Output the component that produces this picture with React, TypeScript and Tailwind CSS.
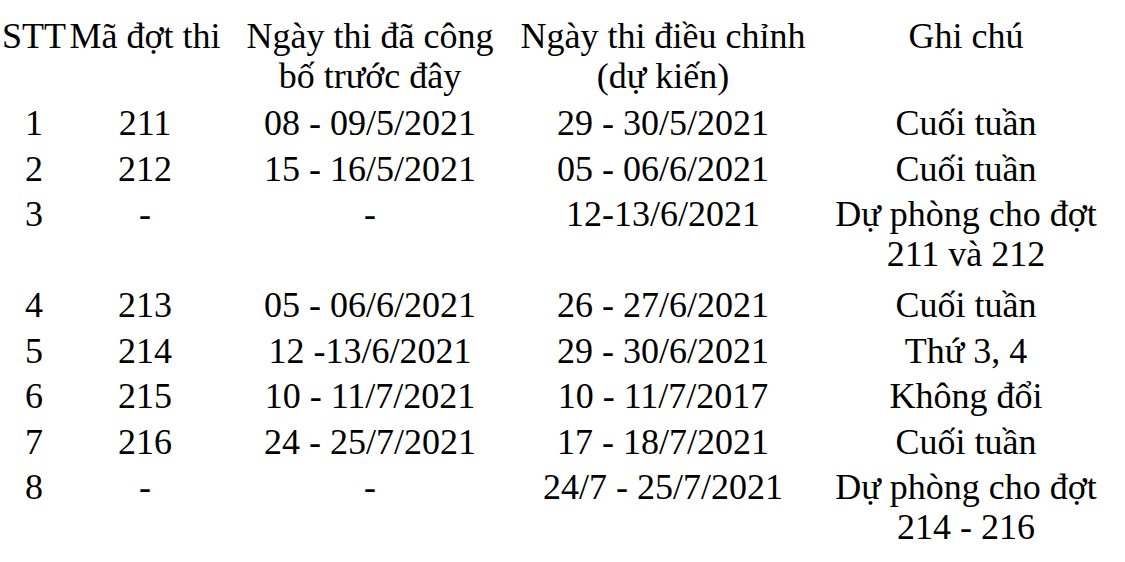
import React from "react"

interface Row {
    stt: string
    code: string
    oldDate: string
    newDate: string
    note: string[]
    tall?: boolean
}

const rows: Row[] = [
    { stt: "1", code: "211", oldDate: "08 - 09/5/2021", newDate: "29 - 30/5/2021", note: ["Cuối tuần"] },
    { stt: "2", code: "212", oldDate: "15 - 16/5/2021", newDate: "05 - 06/6/2021", note: ["Cuối tuần"] },
    { stt: "3", code: "-", oldDate: "-", newDate: "12-13/6/2021", note: ["Dự phòng cho đợt", "211 và 212"], tall: true },
    { stt: "4", code: "213", oldDate: "05 - 06/6/2021", newDate: "26 - 27/6/2021", note: ["Cuối tuần"] },
    { stt: "5", code: "214", oldDate: "12 -13/6/2021", newDate: "29 - 30/6/2021", note: ["Thứ 3, 4"] },
    { stt: "6", code: "215", oldDate: "10 - 11/7/2021", newDate: "10 - 11/7/2017", note: ["Không đổi"] },
    { stt: "7", code: "216", oldDate: "24 - 25/7/2021", newDate: "17 - 18/7/2021", note: ["Cuối tuần"] },
    { stt: "8", code: "-", oldDate: "-", newDate: "24/7 - 25/7/2021", note: ["Dự phòng cho đợt", "214 - 216"], tall: true },
]

const grid = "grid grid-cols-[68px_154px_296px_290px_316px]"

const Cell: React.FC<{ lines: string[] }> = ({ lines }) => (
    <div className="flex flex-col items-center pt-[4px]">
        {lines.map((line, i) => (
            <span key={i} className="whitespace-nowrap">{line}</span>
        ))}
    </div>
)

export default function App() {
    return (
        <div className="w-[1125px] h-[562px] bg-white text-black pt-[12px] overflow-hidden text-[36px] leading-[40px] font-['Liberation_Serif','Times_New_Roman',serif]">
            <div className={`${grid} h-[87px]`}>
                <Cell lines={["STT"]} />
                <Cell lines={["Mã đợt thi"]} />
                <Cell lines={["Ngày thi đã công", "bố trước đây"]} />
                <Cell lines={["Ngày thi điều chỉnh", "(dự kiến)"]} />
                <Cell lines={["Ghi chú"]} />
            </div>
            {rows.map((row) => (
                <div key={row.stt} className={`${grid} ${row.tall ? "h-[91px]" : "h-[45.5px]"}`}>
                    <Cell lines={[row.stt]} />
                    <Cell lines={[row.code]} />
                    <Cell lines={[row.oldDate]} />
                    <Cell lines={[row.newDate]} />
                    <Cell lines={row.note} />
                </div>
            ))}
        </div>
    )
}
